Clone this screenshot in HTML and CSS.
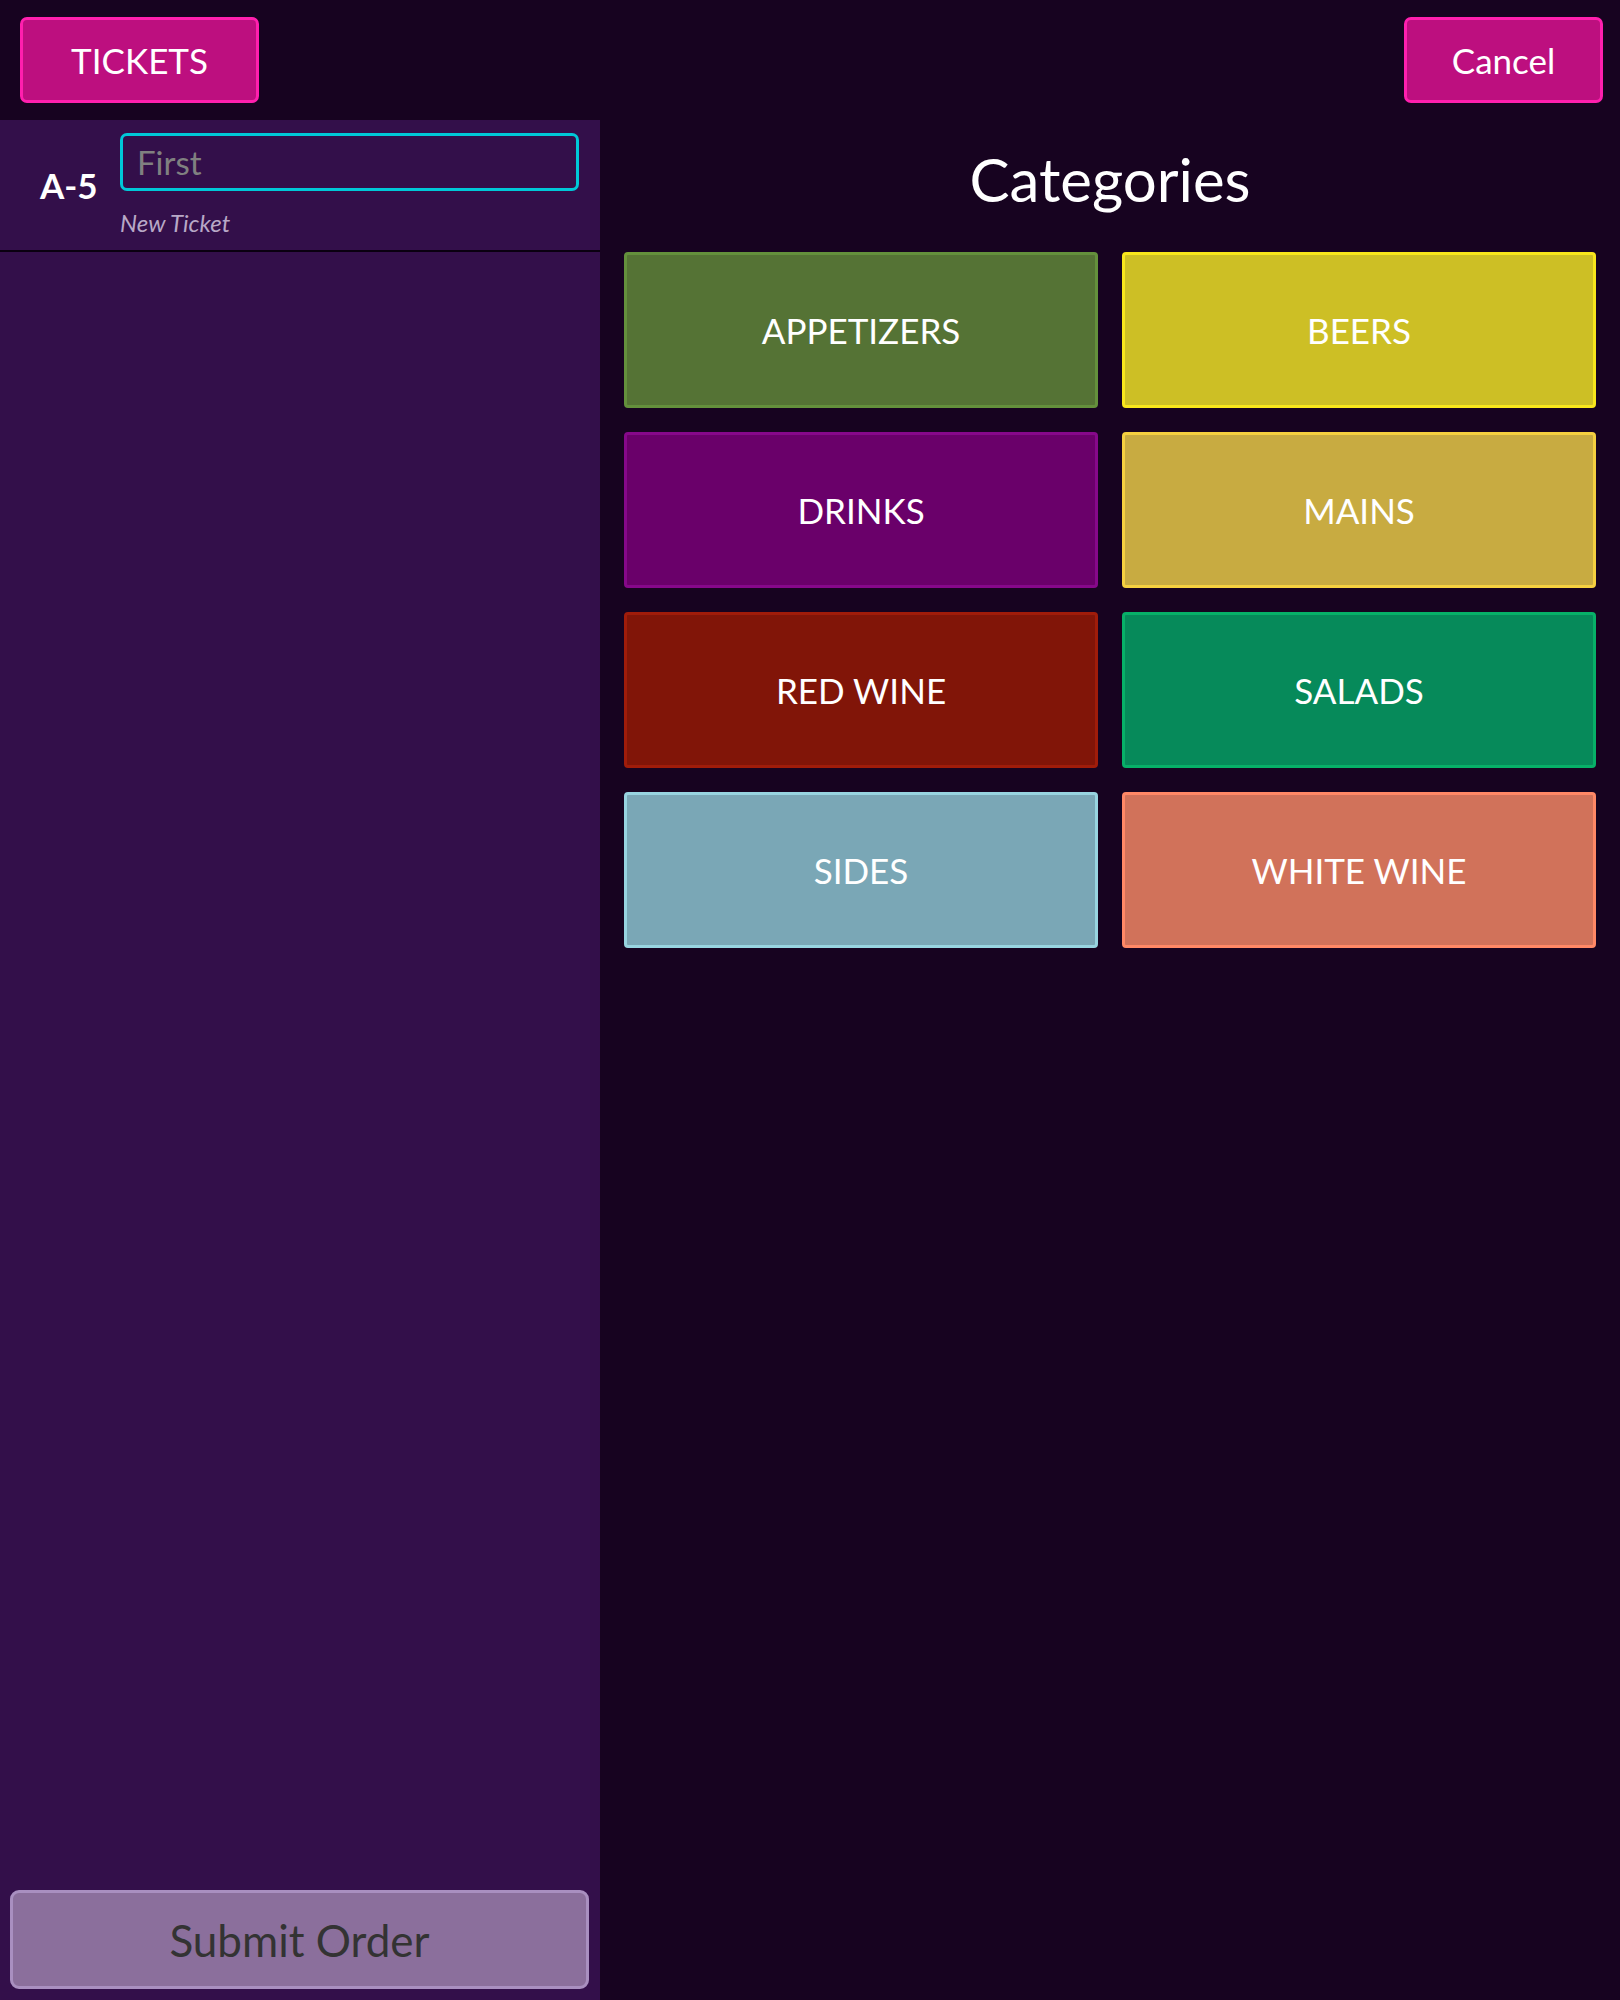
FILE: index.html
```html
<!DOCTYPE html>
<html lang="en">
<head>
<meta charset="utf-8">
<title>Categories</title>
<link rel="stylesheet" href="styles.css">
</head>
<body>
<div class="app">
  <header class="topbar">
    <button class="btn-pink btn-tickets">TICKETS</button>
    <button class="btn-pink btn-cancel">Cancel</button>
  </header>
  <div class="main">
    <aside class="sidebar">
      <div class="ticket-head">
        <div class="ticket-id">A-5</div>
        <div class="ticket-fields">
          <input class="ticket-name" type="text" placeholder="First">
          <div class="ticket-status">New Ticket</div>
        </div>
      </div>
      <div class="ticket-body"></div>
      <button class="btn-submit">Submit Order</button>
    </aside>
    <section class="content">
      <h1 class="title">Categories</h1>
      <div class="tiles">
        <button class="tile tile-appetizers">APPETIZERS</button>
        <button class="tile tile-beers">BEERS</button>
        <button class="tile tile-drinks">DRINKS</button>
        <button class="tile tile-mains">MAINS</button>
        <button class="tile tile-redwine">RED WINE</button>
        <button class="tile tile-salads">SALADS</button>
        <button class="tile tile-sides">SIDES</button>
        <button class="tile tile-whitewine">WHITE WINE</button>
      </div>
    </section>
  </div>
</div>
</body>
</html>
```
FILE: styles.css
```css
* { box-sizing: border-box; }
html, body { margin: 0; padding: 0; }
body {
  background: #170320;
  font-family: Lato, "Open Sans", sans-serif;
  color: #fff;
}
.app {
  width: 1620px;
  height: 2000px;
  display: flex;
  flex-direction: column;
}
.topbar {
  height: 120px;
  display: flex;
  justify-content: space-between;
  align-items: flex-start;
  padding: 17px 17px 0 20px;
}
.btn-pink {
  background: #bd0f7f;
  border: 3px solid #ff1fae;
  border-radius: 7px;
  color: #fff;
  font-family: Lato, sans-serif;
  font-size: 35px;
  height: 86px;
  padding: 0;
}
.btn-tickets { width: 239px; }
.btn-cancel { width: 199px; }
.main {
  flex: 1;
  display: flex;
}
.sidebar {
  width: 600px;
  background: #330f4a;
  display: flex;
  flex-direction: column;
}
.ticket-head {
  height: 132px;
  border-bottom: 2px solid #0a0010;
  display: flex;
  padding: 13px 21px 0 0;
}
.ticket-id {
  width: 120px;
  padding-left: 40px;
  padding-top: 31px;
  font-size: 35px;
  font-weight: 700;
  line-height: 1.2;
}
.ticket-fields {
  flex: 1;
  display: flex;
  flex-direction: column;
}
.ticket-name {
  height: 58px;
  width: 100%;
  background: transparent;
  border: 3px solid #00c8d8;
  border-radius: 7px;
  padding: 0 14px;
  font-family: Lato, sans-serif;
  font-size: 33px;
  color: #fff;
  outline: none;
}
.ticket-name::placeholder { color: #808080; }
.ticket-status {
  margin-top: 17px;
  font-style: italic;
  font-size: 24px;
  color: #b8a8c6;
}
.ticket-body { flex: 1; }
.btn-submit {
  margin: 0 11px 11px 10px;
  height: 99px;
  background: #8b6f9c;
  border: 3px solid #a98fc0;
  border-radius: 9px;
  color: #333;
  font-family: Lato, sans-serif;
  font-size: 44px;
  padding: 0;
}
.content {
  flex: 1;
  padding: 0 24px;
}
.title {
  margin: 22px 0 35px;
  height: 75px;
  font-size: 60px;
  line-height: 75px;
  font-weight: 400;
  text-align: center;
}
.tiles {
  display: grid;
  grid-template-columns: 1fr 1fr;
  grid-auto-rows: 156px;
  gap: 24px;
}
.tile {
  border: 3px solid;
  border-radius: 4px;
  color: #fff;
  font-family: Lato, sans-serif;
  font-size: 35px;
  font-weight: 400;
  padding: 0;
}
.tile-appetizers { background: #557335; border-color: #64903c; }
.tile-beers { background: #cdbf25; border-color: #f8e61c; }
.tile-drinks { background: #6a006a; border-color: #86088a; }
.tile-mains { background: #c8ab41; border-color: #f5d040; }
.tile-redwine { background: #811508; border-color: #a01c0a; }
.tile-salads { background: #068a5a; border-color: #07b068; }
.tile-sides { background: #7aa7b6; border-color: #98d4e0; }
.tile-whitewine { background: #d1725a; border-color: #ff8866; }
```
